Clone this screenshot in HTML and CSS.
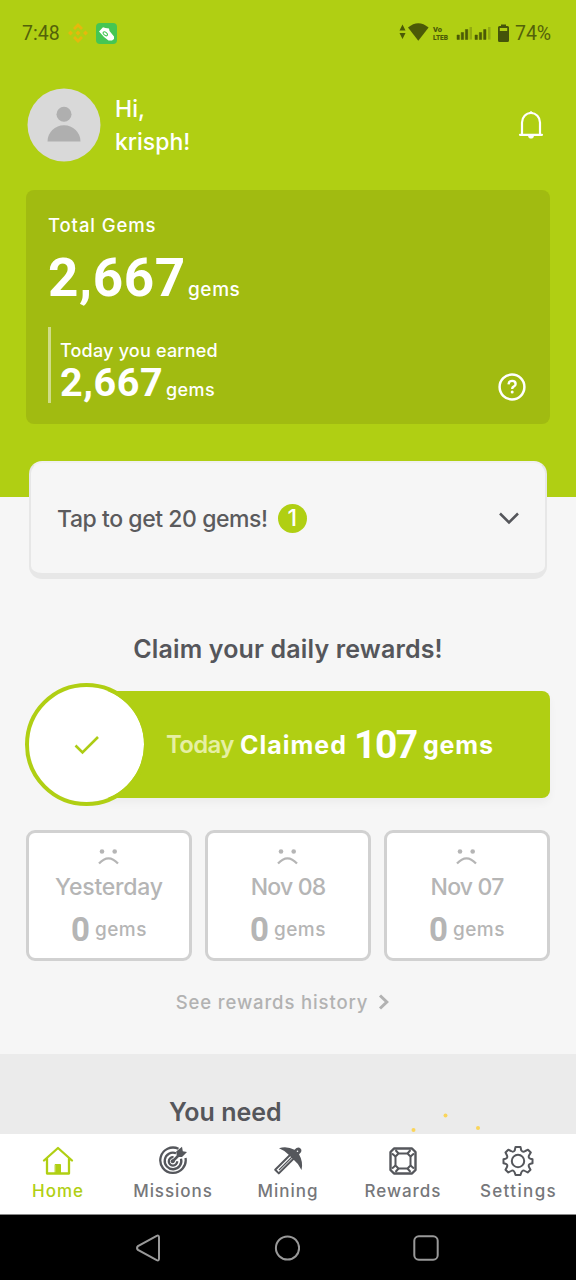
FILE: index.html
```html
<!DOCTYPE html>
<html lang="en">
<head>
<meta charset="utf-8">
<meta name="viewport" content="width=device-width, initial-scale=1">
<title>Home</title>
<link rel="stylesheet" href="styles.css">
</head>
<body>
<div class="screen">
  <header class="hero">
    <div class="status">
      <div class="status-left">
        <span class="clock">7:48</span>
        <svg class="binance" width="20" height="20" viewBox="0 0 20 20"><path fill="#e6b80d" d="M10 0L15 5L13 7L10 4L7 7L5 5ZM10 20L15 15L13 13L10 16L7 13L5 15ZM2.500 7.500L5 10L2.500 12.500L0 10ZM17.500 7.500L20 10L17.500 12.500L15 10ZM10 7.500L12.500 10L10 12.500L7.500 10Z"/></svg>
        <svg width="21" height="21" viewBox="0 0 21 21"><rect width="21" height="21" rx="4" fill="#45c653"/><path d="M3 8.500L7 4.200L9.500 5L13 5.500L13.500 8L18 13.500V16L16 17.500H12.500L8 14Z" fill="#fff"/><ellipse cx="9.300" cy="10.800" rx="2.500" ry="1.500" transform="rotate(40 9.300 10.800)" fill="none" stroke="#45c653"/></svg>
      </div>
      <div class="status-right">
        <svg width="96" height="22" viewBox="0 0 96 22" fill="#4b5a07">
          <path d="M.5 8.500h6L3.500 2.500zM.5 11h6l-3 6z"/>
          <path d="M9 5.500q10.300-8.500 20.600 0L19.300 18.700z"/>
          <text class="volte" x="34" y="9.500" textLength="9" lengthAdjust="spacingAndGlyphs">Vo</text><text class="volte" x="34" y="17.500" textLength="15" lengthAdjust="spacingAndGlyphs">LTEB</text>
          <path d="M58 13h2.400v4.500H58zM62.200 10.500h2.400v7h-2.400zM66.400 7.500h2.400v10h-2.400zM76 13h2.400v4.500H76zM80.300 10.500h2.400v7h-2.400zM84.600 7.500H87v10h-2.400z" stroke="#4b5a07" stroke-width=".5"/>
          <path d="M70.500 5H73v12.500h-2.500zM89 5h2.500v12.500H89z" opacity=".3"/>
        </svg>
        <svg class="battery" width="12" height="19" viewBox="0 0 12 19"><path d="M3 2V.5h5V2h1.500Q11 2 11 3.500v13q0 1.500-1.500 1.500h-8Q0 18 0 16.500v-13Q0 2 1.500 2z" fill="#45540a"/><path d="M1.800 4h7.400v3H1.800z" fill="#b0cf13"/></svg>
        <span class="percent">74%</span>
      </div>
    </div>

    <div class="profile">
      <svg class="avatar" width="74" height="74" viewBox="0 0 74 74"><circle cx="37" cy="37" r="36.500" fill="#d9d9d9"/><circle cx="37" cy="26.300" r="7.500" fill="#afafaf"/><path d="M20.500 53.500a16.500 16.200 0 0 1 33 0z" fill="#afafaf"/></svg>
      <div class="greeting"><div class="hi">Hi,</div><div class="user">krisph!</div></div>
      <svg class="bell" width="26" height="30" viewBox="0 0 26 30" fill="none" stroke="#fff" stroke-width="2.200"><path d="M4 24.500V12.500a9 9.500 0 0 1 18 0v12M2 24.800h22" stroke-linecap="round"/><path d="M10.500 3.500L13 1.500l2.500 2zM10.500 26.500h5l-1 1.500h-3z" fill="#fff" stroke-width="1"/></svg>
    </div>

    <section class="total">
      <div class="label total-label">Total Gems</div>
      <div class="amount"><span class="big">2,667</span><span class="unit">gems</span></div>
      <div class="today">
        <div class="label today-label">Today you earned</div>
        <div class="amount small"><span class="mid">2,667</span><span class="unit unit-small">gems</span></div>
      </div>
      <svg class="help" width="28" height="28" viewBox="0 0 28 28"><circle cx="14" cy="14" r="12.400" fill="none" stroke="#fff" stroke-width="2.500"/><path d="M10.500 11.400q.3-3.500 3.600-3.500 3.500 0 3.500 3 0 1.700-2 2.700-1.400.7-1.400 2.300" fill="none" stroke="#fff" stroke-width="2.400"/><circle cx="14.200" cy="18.900" r="1.500" fill="#fff"/></svg>
    </section>
  </header>

  <main class="content">
    <section class="tap">
      <span class="tap-text">Tap to get 20 gems!</span>
      <span class="count">1</span>
      <svg class="chevron" width="20" height="13" viewBox="0 0 20 13"><path d="M1 1.500l9 9 9-9" fill="none" stroke="#55565b" stroke-width="2.500"/></svg>
    </section>

    <h2 class="claim-title">Claim your daily rewards!</h2>

    <section class="claim">
      <div class="claim-check"><svg width="26" height="20" viewBox="0 0 26 20"><path d="M1.500 10.500l7 7L24 2" fill="none" stroke="#adcc14" stroke-width="2.600"/></svg></div>
      <div class="claim-bar"><span class="faded">Today</span><span class="claimed">Claimed</span><span class="value">107</span><span class="gem-word">gems</span></div>
    </section>

    <section class="days">
      <div class="day">
        <svg width="22" height="17" viewBox="0 0 22 17"><use href="#sad"/></svg>
        <div class="date yesterday">Yesterday</div><div class="earned"><span class="zero">0</span><span>gems</span></div>
      </div>
      <div class="day">
        <svg width="22" height="17" viewBox="0 0 22 17"><g id="sad"><circle cx="4" cy="3.500" r="2.300" fill="#b5b5b5"/><circle cx="16.700" cy="3.500" r="2.300" fill="#b5b5b5"/><path d="M1 15.600q9.500-10.500 19 0" fill="none" stroke="#b5b5b5" stroke-width="2.200"/></g></svg>
        <div class="date">Nov 08</div><div class="earned"><span class="zero">0</span><span>gems</span></div>
      </div>
      <div class="day">
        <svg width="22" height="17" viewBox="0 0 22 17"><use href="#sad"/></svg>
        <div class="date">Nov 07</div><div class="earned"><span class="zero">0</span><span>gems</span></div>
      </div>
    </section>

    <div class="history"><span>See rewards history</span><svg width="12" height="16" viewBox="0 0 12 16"><path d="M2 1.500l6.800 6.500L2 14.500" fill="none" stroke="#b2b2b2" stroke-width="3"/></svg></div>
  </main>

  <section class="need">
    <h2 class="need-title">You need</h2>
    <svg width="72" height="24" viewBox="0 0 72 24" fill="#fad55b"><circle cx="4.500" cy="20" r="2"/><circle cx="36.500" cy="5.500" r="2"/><circle cx="69" cy="18" r="2"/></svg>
  </section>

  <nav class="tabs">
    <div class="tab active">
      <svg width="32" height="32" viewBox="0 0 32 32" fill="none" stroke="#b0cf13" stroke-width="2.300" stroke-linejoin="round" stroke-linecap="round"><path d="M2 15.500L16 3l14 12.500M5 13.500v15h22v-15"/><path d="M13.500 19.500h5v9h-5z" fill="#b0cf13" stroke-width="1"/></svg>
      <span>Home</span>
    </div>
    <div class="tab">
      <svg width="32" height="32" viewBox="0 0 32 32" fill="none" stroke="#55575c" stroke-width="2.300"><path d="M21.500 3.800A12.700 12.700 0 1 0 28.500 13"/><path d="M19 8.200a8.300 8.300 0 1 0 5 5.500"/><path d="M16.500 12.200a4.200 4.200 0 1 0 3.700 4"/><path d="M15.500 16.500l7-7" stroke-width="2.500"/><path d="M20 12l-.8-5.500L25 1.800l.8 4.500 4.200.700-5 5z" fill="#55575c" stroke="none"/><circle cx="15.700" cy="16.300" r="2" fill="#55575c" stroke="none"/></svg>
      <span>Missions</span>
    </div>
    <div class="tab">
      <svg width="32" height="32" viewBox="0 0 32 32"><path d="M7 3.200Q15 .8 22.500 4.800Q26 1 28.500 3.500T27 9.200Q31.500 17 29.500 25Q26.500 18.500 21.500 14.500L17 10Q13 5.500 7 3.200Z" fill="#55575c"/><path d="M18.500 9.500L3.200 24.800 6.800 28.400 22 13.200" fill="none" stroke="#55575c" stroke-width="2" stroke-linejoin="round"/><path d="M20 12L7 25" stroke="#55575c" stroke-width="1.200"/><circle cx="25.500" cy="6.200" r=".8" fill="#fff"/></svg>
      <span>Mining</span>
    </div>
    <div class="tab">
      <svg width="32" height="32" viewBox="0 0 32 32" fill="none" stroke="#55575c" stroke-width="2"><path d="M7 3.500h18l3.500 3.500v18L25 28.500H7L3.500 25V7z" stroke-linejoin="round" stroke-width="2.400"/><path d="M11.500 8.500h9l3 3v9l-3 3h-9l-3-3v-9z"/><path d="M5 8.500l3.500 3M8.500 5l3 3.500M23.500 5l-3 3.500M27 8.500l-3.500 3M5 23.500l3.500-3M8.500 27l3-3.500M23.500 27l-3-3.500M27 23.500l-3.500-3"/></svg>
      <span>Rewards</span>
    </div>
    <div class="tab">
      <svg width="32" height="32" viewBox="0 0 32 32" fill="none" stroke="#55575c" stroke-width="2" stroke-linejoin="round"><path d="M13.500 2h5l.8 3.500q1.700 2.200 4 .5l2.700-1.300 2.800 2.800L27 10.500q-1 2.500 1.500 3.200l2 .5v4l-2 .5q-2.500.8-1.500 3.300l1.500 2.700-2.800 2.800-2.700-1.500q-2.500-1.500-3.700 1.500l-.8 2.500h-5l-.8-2.500Q11.500 24.500 9 26l-2.700 1.500-2.800-2.800L5 22q1-2.500-1.500-3.300l-2-.5v-4l2-.5Q6 13 5 10.500L3.500 7.500l2.800-2.800L9 6q2.500 1.500 3.700-.5z"/><circle cx="16" cy="16" r="6.200"/></svg>
      <span class="settings">Settings</span>
    </div>
  </nav>

  <footer class="system">
    <svg width="24" height="28" viewBox="1 0 24 28"><path d="M21.700 1.800Q24 .8 24 3.500v21q0 2.700-2.300 1.700L3 16Q1 14 3 12z" fill="none" stroke="#999" stroke-width="2"/></svg>
    <svg width="26" height="26" viewBox="0 0 26 26"><circle cx="13.500" cy="13" r="11.600" fill="none" stroke="#999" stroke-width="2"/></svg>
    <svg width="26" height="26" viewBox="0 0 26 26"><rect x="1.300" y="1.300" width="23.400" height="23.400" rx="4.500" fill="none" stroke="#999" stroke-width="2"/></svg>
  </footer>
</div>
</body>
</html>
```
FILE: styles.css
```css
* { box-sizing: border-box; margin: 0; }
body { background: #f6f6f6; font-family: Inter, "Noto Sans", sans-serif; font-weight: 500; }
svg { display: block; flex: none; }
span, h2, .label, .date { white-space: nowrap; }
.screen { width: 576px; height: 1280px; display: flex; flex-direction: column; overflow: hidden; }

.hero { height: 497px; background: #b0cf13; flex: none; padding: 22px 26px 0; }
.status { display: flex; justify-content: space-between; height: 22px; margin: 0 -4px; font-family: Roboto, sans-serif; font-size: 19.5px; line-height: 23px; color: #53620a; font-weight: 400; }
.status-left, .status-right { display: flex; align-items: center; }
.binance { margin: 0 8px 0 8px; }
.battery { margin: 0 5px 0 3px; }
.volte { font: 900 6.800px Roboto, sans-serif; }
.percent { letter-spacing: -.1px; margin-right: 3px; }

.profile { display: flex; align-items: center; height: 74px; margin: 44px 6px 0 1px; color: #fff; }
.greeting { margin: 2px 0 0 14px; font-size: 23px; line-height: 33px; flex: 1; }

.total { position: relative; height: 234px; margin-top: 28px; border-radius: 8px; background: #a1bb11; color: #fff; padding: 22px; }
.label { font-size: 18.500px; line-height: 26px; }
.total-label { letter-spacing: .9px; }
.amount { display: flex; align-items: baseline; }
.big, .mid, .value, .zero { font-family: Roboto, sans-serif; font-weight: 700; }
.big { width: 140px; font-size: 53px; line-height: 62px; margin-top: 9px; letter-spacing: .6px; }
.unit { font-size: 19px; letter-spacing: .6px; }
.today { height: 76px; border-left: 3px solid #d0dd88; margin-top: 18px; padding: 11px 0 0 9px; }
.today-label { font-size: 18px; letter-spacing: .2px; }
.mid { width: 106px; font-size: 39.500px; line-height: 38px; letter-spacing: .6px; }
.unit-small { font-size: 18px; letter-spacing: .4px; }
.help { position: absolute; right: 24px; bottom: 23px; }

.content { height: 557px; flex: none; padding: 0 26px; }
.tap { height: 118px; margin: -36px 3px 0; border: 2px solid #e7e7e7; border-top-color: #f0f0f0; border-bottom-width: 6px; border-radius: 13px; background: #f6f6f6; display: flex; align-items: center; padding: 0 26px; color: #5b5b5d; }
.tap-text { font-size: 23px; letter-spacing: -.43px; padding-top: 2px; }
.count { width: 29px; height: 29px; margin-left: 10px; border-radius: 50%; background: #b0cf13; color: #fff; font-size: 23px; line-height: 29px; text-align: center; }
.chevron { margin-left: auto; }
.claim-title { margin-top: 52px; line-height: 36px; font-size: 25px; letter-spacing: .15px; font-weight: 600; text-align: center; color: #55565b; }
.claim { display: grid; margin: 16px 0 0 -1px; height: 123px; align-items: center; }
.claim-check, .claim-bar { grid-area: 1 / 1; }
.claim-check { z-index: 1; width: 123px; height: 123px; border: 4px solid #b0cf13; border-radius: 50%; background: #fff; background-clip: padding-box; display: grid; place-items: center; }
.claim-bar { height: 107px; margin-left: 60px; padding-left: 81px; border-radius: 8px; background: #b0cf13; color: #fff; display: flex; align-items: center; font-size: 25px; font-weight: 700; box-shadow: 0 5px 8px #0000000a; }
.faded { width: 74px; color: #e6efa3; font-size: 24px; font-weight: 600; letter-spacing: -.7px; }
.claimed { width: 114px; letter-spacing: 1px; }
.value { width: 69px; font-size: 39px; letter-spacing: -1.5px; }
.gem-word { letter-spacing: .8px; }

.days { display: grid; grid-template-columns: repeat(3, 166px); justify-content: space-between; margin-top: 24px; }
.day { height: 131px; border: 3px solid #d1d1d1; border-radius: 9px; background: #fff; color: #b5b5b5; display: flex; flex-direction: column; align-items: center; padding-top: 15px; }
.date { font-size: 23px; line-height: 30px; margin-top: 7px; letter-spacing: -.8px; }
.yesterday { letter-spacing: -.2px; }
.earned { display: flex; align-items: center; gap: 5px; height: 36px; margin-top: 9px; font-size: 19px; letter-spacing: .5px; }
.zero { font-size: 33px; letter-spacing: 0; }
.history { display: flex; align-items: center; justify-content: center; gap: 10px; margin: 27px 10px 0 0; height: 28px; font-size: 18.500px; color: #b2b2b2; letter-spacing: .87px; }

.need { flex: none; height: 80px; background: #ebebeb; display: flex; align-items: flex-end; padding: 0 95px 0 169px; justify-content: space-between; }
.need-title { font-size: 25px; line-height: 30px; margin-bottom: 7px; color: #55565b; font-weight: 600; }
.tabs { flex: none; height: 81px; background: #fff; display: grid; grid-template-columns: repeat(5, 115px); border-bottom: 1px solid #888; }
.tab { display: flex; flex-direction: column; align-items: center; padding-top: 11px; font-size: 17px; line-height: 26px; color: #76777a; letter-spacing: .95px; }
.tab span { margin-top: 1px; padding-left: 1px; }
.tab span { font-weight: 450; }
.tab .settings { letter-spacing: 1.35px; padding-left: 2px; }
.active { color: #b0cf13; }
.system { flex: 1; background: #000; display: flex; justify-content: space-between; align-items: center; padding: 0 137px 0 136px; }
```
